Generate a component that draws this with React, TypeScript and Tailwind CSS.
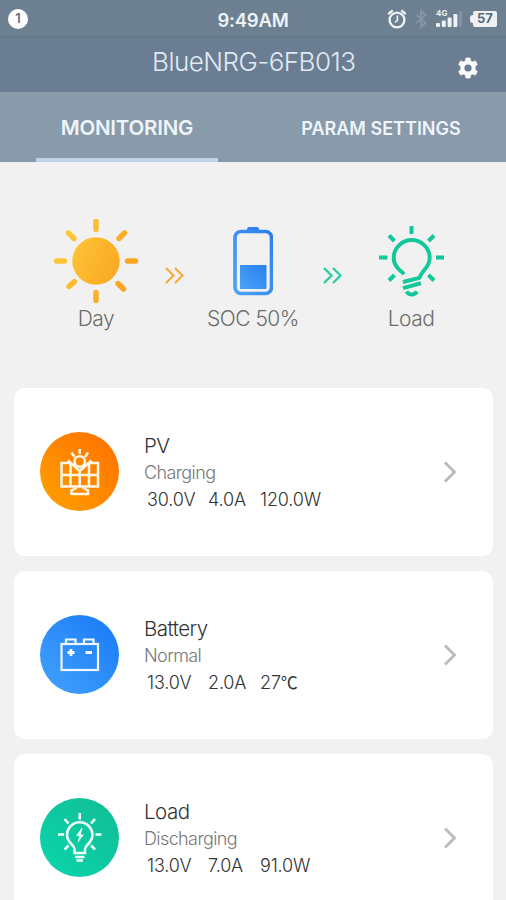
import type { ReactNode } from 'react';

interface Device {
    name: string;
    status: string;
    values: string[];
    color: string;
    icon: ReactNode;
}

const VALUE_WIDTHS = ['w-[61px]', 'w-[52px]', 'w-[80px]'];

const SUN_RAYS = [
    [0, -39.5, 0.01, -31.5],
    [28.5, -28, 23, -22.5],
    [39.5, 0, 31.5, 0.01],
    [27.5, 28, 22, 22.5],
    [0, 39.5, 0.01, 31.5],
    [-27, 25.5, -21.5, 20.5],
    [-39.5, 0, -31.5, 0.01],
    [-27.5, -28, -22, -22.5],
];

function AlarmIcon() {
    return (
        <svg width="20" height="20" viewBox="0 0 20 20" fill="none" stroke="#eef2f5" strokeLinecap="round">
            <circle cx="10" cy="11" r="7.4" strokeWidth="2.4" />
            <path d="M10.4 7v4.3L8.4 13" strokeWidth="1.6" />
            <path d="M2 4.4 5 2M18 4.4 15 2" strokeWidth="2.4" />
        </svg>
    );
}

function BluetoothIcon() {
    return (
        <svg width="14" height="20" viewBox="0 0 14 20" fill="none" stroke="#8496a6" strokeWidth="2">
            <path d="M2.5 6l9 8L7 18V2l4.5 4-9 8" />
        </svg>
    );
}

function SignalBars() {
    return (
        <svg width="26" height="16" viewBox="0 0 26 16" fill="#eef2f5">
            <rect x="0" y="12" width="4" height="4" rx="1" />
            <rect x="5.8" y="9.6" width="4" height="6.4" rx="1" />
            <rect x="11.6" y="6.5" width="4" height="9.5" rx="1" />
            <rect x="17.4" y="3" width="4" height="13" rx="1" />
            <rect x="22.8" y="0" width="3.2" height="16" rx="1" fill="#8092a2" />
        </svg>
    );
}

function GearIcon() {
    return (
        <svg width="22" height="22" viewBox="0 0 22 22">
            <path
                d="M9 1h4l.7 3 1.6.9 3-1 2 3.5-2.2 2.1v3l2.2 2.1-2 3.5-3-1-1.6.9-.7 3H9l-.7-3-1.6-.9-3 1-2-3.5 2.2-2.1v-3L1.7 7.4l2-3.5 3 1L8.3 4z"
                fill="#f8fafb"
                stroke="#f8fafb"
                strokeWidth="0.8"
                strokeLinejoin="round"
            />
            <circle cx="11" cy="11" r="3.6" fill="#6a7c91" />
        </svg>
    );
}

function SunIcon() {
    return (
        <svg width="86" height="86" viewBox="-43 -43 86 86">
            <defs>
                <linearGradient id="sun" gradientUnits="userSpaceOnUse" x1="-40" y1="-20" x2="40" y2="20">
                    <stop offset="0" stopColor="#fdcb3a" />
                    <stop offset="1" stopColor="#fa9f1d" />
                </linearGradient>
            </defs>
            <circle r="23.7" fill="url(#sun)" />
            <g stroke="url(#sun)" strokeWidth="5.4" strokeLinecap="round">
                {SUN_RAYS.map(([x1, y1, x2, y2], i) => (
                    <line key={i} x1={x1} y1={y1} x2={x2} y2={y2} />
                ))}
            </g>
        </svg>
    );
}

function BatteryLevelIcon() {
    return (
        <svg width="40" height="70" viewBox="0 0 40 70">
            <defs>
                <linearGradient id="cell" x1="0" y1="1" x2="1" y2="0">
                    <stop offset="0" stopColor="#4ba3f6" />
                    <stop offset="1" stopColor="#2a80ee" />
                </linearGradient>
            </defs>
            <path d="M14 5V3.2Q14 1 16.2 1h7.6Q26 1 26 3.2V5z" fill="#2f80ee" />
            <rect x="2" y="5.5" width="36.5" height="62" rx="6" fill="none" stroke="url(#cell)" strokeWidth="3.6" />
            <rect x="7" y="39" width="26.5" height="24" fill="url(#cell)" />
        </svg>
    );
}

function BulbIcon() {
    return (
        <svg width="66" height="72" viewBox="0 0 66 72" fill="none" stroke="#12c79a" strokeWidth="3.9" strokeLinejoin="round">
            <path d="M26.2 48C22 44.5 15.7 40 15.7 32a18 18 0 0 1 36 0c0 10-8 12-10.2 19.800L25 56" />
            <path d="M25 62.2l18-5" />
            <path d="M28.500 65.500c2.500 4 8 4 10.500 0" />
            <path d="M33.5 0v8M11 9.5l5.500 5.500M56 9.5 50.500 15M1 31.500h8.500M58 31.500h8M11 54.500l5.500-5.500M56 54.500 50.500 49" />
        </svg>
    );
}

function DoubleArrow({ color }: { color: string }) {
    return (
        <svg width="19" height="17" viewBox="0 0 19 17" fill="none" stroke={color} strokeWidth="2.2">
            <path d="M1 1l7.5 7.5L1 16M10 1l7.5 7.5L10 16" />
        </svg>
    );
}

function PanelIcon() {
    return (
        <svg width="79" height="79" viewBox="0 0 79 79" fill="none" stroke="#fff8ea" strokeWidth="2.5">
            <path d="M31 31H21.5v23.5H58V31H48.500M21.5 43H58M30.5 31v23.5M39.700 38v16.5M49 31v23.5M28 28.500l11.700 10.500 11.800-10.500" />
            <circle cx="39.700" cy="29.500" r="5.200" />
            <path d="M39.700 17v5M31.500 20.500l3 4.500M48 20.500l-3 4.500" />
            <path d="M37 55.500l-5.500 3V62H48v-3.500l-5.500-3" />
        </svg>
    );
}

function CarBatteryIcon() {
    return (
        <svg width="79" height="79" viewBox="0 0 79 79" fill="none" stroke="#f1f8ff" strokeWidth="2.2">
            <rect x="21.500" y="29" width="36.500" height="26" />
            <path d="M26 29v-4.500h9.500V29M44 29v-4.500h9.500V29" />
            <path d="M27.500 37.500h7M31 34v7M45.500 37.500H52" strokeWidth="2.8" />
        </svg>
    );
}

function LoadIcon() {
    return (
        <svg width="79" height="79" viewBox="0 0 79 79" fill="none" stroke="#effffa" strokeWidth="2.6">
            <path d="M34.500 55v-4c0-4-7.500-6-7.500-14a12.700 12.700 0 0 1 25.400 0c0 8-7.400 10-7.400 14v4z" />
            <path d="M35 59h9.500M36.500 62.500h6.500" />
            <path d="M41.500 30l-5.500 8h3.200L37.500 45l6.500-8.500h-3.300L42.500 30z" fill="#effffa" stroke="none" />
            <path d="M39.700 15v6.500M24.500 21l4 4.500M55 21 51 25.500M18 36.500h6M55.500 36.500h6M24.500 51.500l4-4M55 51.500l-4-4" />
        </svg>
    );
}

const devices: Device[] = [
    {
        name: 'PV',
        status: 'Charging',
        values: ['30.0V', '4.0A', '120.0W'],
        color: 'bg-linear-to-tr from-[#ffa100] to-[#ff6d00]',
        icon: <PanelIcon />,
    },
    {
        name: 'Battery',
        status: 'Normal',
        values: ['13.0V', '2.0A', '27℃'],
        color: 'bg-linear-to-tr from-[#43a2fa] to-[#1778f8]',
        icon: <CarBatteryIcon />,
    },
    {
        name: 'Load',
        status: 'Discharging',
        values: ['13.0V', '7.0A', '91.0W'],
        color: 'bg-linear-to-tr from-[#08d6ad] to-[#12bc95]',
        icon: <LoadIcon />,
    },
];

function DeviceValue({ value }: { value: string }) {
    // Inter's own ℃ is too wide, take the compact one from the CJK font
    if (value.endsWith('℃')) {
        return (
            <>
                {value.slice(0, -1)}
                <span className="font-['Noto_Sans_CJK_SC',sans-serif] text-[17px] font-normal leading-none">℃</span>
            </>
        );
    }
    return <>{value}</>;
}

function DeviceCard({ device }: { device: Device }) {
    return (
        <div className="flex h-[168px] shrink-0 items-center rounded-[11px] bg-white pl-[26px] pr-9">
            <div className={`-mt-px size-[79px] shrink-0 rounded-full ${device.color}`}>{device.icon}</div>
            <div className="ml-[25px] flex-1 whitespace-nowrap">
                <h2 className="pt-0.5 text-[20.5px] leading-7 tracking-[-0.5px] text-[#333]">{device.name}</h2>
                <p className="-mt-px text-[18px] leading-[27px] tracking-[-0.6px] text-[#777]">{device.status}</p>
                <div className="flex h-7 pl-[3px] text-[18px] leading-[28px] tracking-[-0.15px] text-[#333]">
                    {device.values.map((v, i) => (
                        <span key={v} className={VALUE_WIDTHS[i]}><DeviceValue value={v} /></span>
                    ))}
                </div>
            </div>
            <svg width="14" height="22" viewBox="0 0 14 22" fill="none" stroke="#bdbdbd" strokeWidth="3">
                <path d="M2 1.5 11.5 11 2 20.5" />
            </svg>
        </div>
    );
}

export default function App() {
    return (
        <div className="flex h-[900px] w-[506px] flex-col overflow-hidden bg-[#f1f1f1] font-['Inter','Noto_Sans_CJK_SC',sans-serif] font-light">
            {/* STATUS BAR */}
            <div className="flex h-[37px] shrink-0 items-center border-b border-[#647789] bg-[#6c8092] pl-2 pr-[9px] pt-px text-[#eef2f5]">
                <div className="flex h-5 w-[160px]">
                    <span className="flex size-5 items-center justify-center rounded-full bg-white text-[13px] font-semibold text-[#5b6c7c]">1</span>
                </div>
                <span className="w-[170px] pt-0.5 text-center text-[18.5px] font-semibold leading-6 tracking-[-0.2px]">9:49AM</span>
                <div className="ml-auto flex items-center">
                    <AlarmIcon />
                    <span className="ml-[7px]"><BluetoothIcon /></span>
                    <div className="relative ml-2">
                        <SignalBars />
                        <span className="absolute -top-0.5 left-0 text-[8px] font-bold leading-none">4G</span>
                    </div>
                    <div className="ml-2 flex items-center">
                        <span className="h-2 w-[3px] rounded-l-sm bg-[#eef2f5]" />
                        <span className="flex h-4 w-6 items-center justify-center rounded-[2px] bg-[#eef2f5] text-[13px] font-bold text-[#5b6c7c]">57</span>
                    </div>
                </div>
            </div>

            {/* TITLE */}
            <header className="flex h-[55px] shrink-0 items-center bg-[#6a7d92] pl-[152px] pr-[27px]">
                <h1 className="-mt-1.5 whitespace-nowrap text-[26px] leading-8 tracking-[-0.5px] text-[#e0eaf3]">BlueNRG-6FB013</h1>
                <button className="ml-auto mt-1.5"><GearIcon /></button>
            </header>

            {/* TABS */}
            <nav className="flex h-[70px] shrink-0 bg-[#899aaa] text-[#edf4fa]">
                <button className="ml-9 w-[182px] border-b-4 border-[#bfd2e5] pt-1.5 text-[20.5px] font-semibold tracking-[-0.2px]">MONITORING</button>
                <button className="ml-[72px] w-[182px] pt-0.5 text-[18px] font-semibold">PARAM SETTINGS</button>
            </nav>

            {/* ENERGY FLOW */}
            <section className="flex h-[226px] shrink-0 pl-[36px] text-[21px] leading-[28px] tracking-[-0.5px] text-[#6d6d6d]">
                <div className="flex w-[120px] flex-col items-center pt-14">
                    <SunIcon />
                    <span className="mt-px">Day</span>
                </div>
                <div className="w-[37px] pt-[105px] pl-[9px]"><DoubleArrow color="#f5ab3d" /></div>
                <div className="flex w-[120px] flex-col items-center pt-16">
                    <BatteryLevelIcon />
                    <span className="mt-[9px] whitespace-nowrap">SOC 50%</span>
                </div>
                <div className="w-[37px] pt-[105px] pl-[10px]"><DoubleArrow color="#25cea1" /></div>
                <div className="flex w-[122px] flex-col items-center pt-16">
                    <BulbIcon />
                    <span className="mt-[7px]">Load</span>
                </div>
            </section>

            {/* DEVICES */}
            <main className="flex flex-col gap-[15px] pl-[14px] pr-[13px]">
                {devices.map((d) => (
                    <DeviceCard key={d.name} device={d} />
                ))}
            </main>
        </div>
    );
}
